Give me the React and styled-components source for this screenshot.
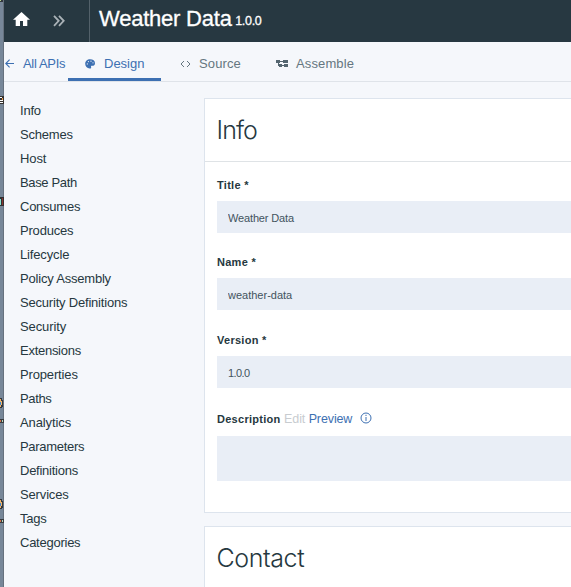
import React from "react";
import styled, { createGlobalStyle } from "styled-components";

const Global = createGlobalStyle`
  * { box-sizing: border-box; }
  body { margin: 0; background: #f5f7fb; font-family: "Liberation Sans", Arial, sans-serif; color: #263840; overflow: hidden; }
`;

const Window = styled.div`
  display: flex;
  width: 571px;
  height: 587px;
  overflow: hidden;
`;

const Desktop = styled.svg`
  flex: 0 0 4px;
  display: block;
`;

const Page = styled.div`
  flex: 1;
  min-width: 0;
  display: flex;
  flex-direction: column;
`;

const Header = styled.header`
  flex: 0 0 42px;
  display: flex;
  background: #273841;
  color: #fff;
`;

const HeaderTools = styled.div`
  width: 86px;
  border-right: 1px solid #53616a;
  display: flex;
  padding: 12px 0 0 9px;
  gap: 23px;
`;

const HeaderTitle = styled.h1`
  margin: 0;
  padding-left: 9px;
  font-size: 22px;
  font-weight: 400;
  line-height: 37px;
  letter-spacing: -0.22px;
  white-space: nowrap;
  -webkit-text-stroke: 0.3px #fff;
`;

const HeaderVersion = styled.small`
  font-size: 12.5px;
  margin-left: 3.5px;
  letter-spacing: -0.3px;
  vertical-align: 1px;
  line-height: 1;
`;

const Tabs = styled.nav`
  flex: 0 0 40px;
  display: flex;
  border-bottom: 1px solid #dfe3e9;
`;

const Tab = styled.a`
  display: flex;
  align-items: center;
  width: ${(p) => p.$width}px;
  height: 39px;
  padding: 7px 0 0 ${(p) => p.$pad}px;
  gap: ${(p) => p.$gap}px;
  border-bottom: 3px solid ${(p) => (p.$active ? "#3d70b2" : "transparent")};
  color: ${(p) => (p.$muted ? "#657680" : "#3d70b2")};
  font-size: 13px;
  letter-spacing: ${(p) => p.$track || 0}px;
  white-space: nowrap;
`;

const Body = styled.div`
  flex: 1;
  min-height: 0;
  display: flex;
`;

const Sidebar = styled.ul`
  flex: 0 0 200px;
  margin: 0;
  padding: 17px 0 0 16px;
  list-style: none;
`;

const SidebarItem = styled.li`
  height: 24px;
  line-height: 24px;
  font-size: 13px;
  letter-spacing: ${(p) => p.$track || 0}px;
`;

const Content = styled.main`
  flex: 1;
  min-width: 0;
  padding-top: 16px;
  display: flex;
  flex-direction: column;
  gap: 13px;
`;

const Panel = styled.section`
  flex: 0 0 ${(p) => p.$height}px;
  background: #fff;
  border: 1px solid #dde4ed;
  border-right: 0;
`;

const PanelTitle = styled.h2`
  margin: 0;
  height: 63px;
  padding-left: 11.5px;
  border-bottom: 1px solid #dfe3e6;
  font-family: Inter, sans-serif;
  font-weight: 300;
  font-size: 25px;
  line-height: 63px;
  letter-spacing: ${(p) => p.$track || 0}px;
`;

const Form = styled.div`
  padding: 16px 0 0 12px;
  display: flex;
  flex-direction: column;
`;

const Field = styled.label`
  display: block;
  height: ${(p) => p.$height}px;
`;

const Label = styled.div`
  display: flex;
  height: ${(p) => p.$height || 23}px;
  line-height: 14px;
  font-size: 11px;
  font-weight: 700;
  letter-spacing: 0.28px;
  white-space: nowrap;
`;

const Mode = styled.span`
  margin-left: 3.5px;
  font-size: 12.5px;
  font-weight: 400;
  letter-spacing: -0.12px;
  color: ${(p) => (p.$active ? "#c8ccd0" : "#3d70b2")};
`;

const Input = styled.input`
  display: block;
  width: 100%;
  height: 32px;
  border: 0;
  padding: 2px 0 0 11px;
  background: #e9eef6;
  color: #43535e;
  font: 11px "Liberation Sans", Arial, sans-serif;
  letter-spacing: ${(p) => p.$track || 0}px;
`;

const TextArea = styled.textarea`
  display: block;
  width: 100%;
  height: 45px;
  border: 0;
  resize: none;
  background: #e9eef6;
`;

const InfoIcon = styled.svg`
  margin: 0 0 0 7.5px;
`;

const sections = [
  ["Info", -0.2], ["Schemes", -0.2], ["Host", -0.1], ["Base Path", -0.35],
  ["Consumes", -0.25], ["Produces", -0.2], ["Lifecycle", -0.15],
  ["Policy Assembly", -0.2], ["Security Definitions", -0.2], ["Security", -0.1],
  ["Extensions", -0.27], ["Properties", -0.15], ["Paths", -0.35],
  ["Analytics", -0.1], ["Parameters", -0.3], ["Definitions", -0.25],
  ["Services", -0.15], ["Tags", -0.2], ["Categories", -0.25],
];

/* Slice of the desktop icons visible beside the window edge. */
const labelMarks = [421, 521];
const roundIcons = [403, 504];

export default function App() {
  return (
    <Window>
      <Global />
      <Desktop width="4" height="587" viewBox="0 0 4 587" shapeRendering="crispEdges">
        <rect width="4" height="587" fill="#778799" />
        <rect x="3" width="1" height="587" fill="#66717e" />
        <path d="M0 0h3v2H0Z" fill="#33383e" />
        <path d="M0 0h1v1H0Z" fill="#b9d789" />
        <path d="M0 96h4v8H0Z" fill="#34312f" />
        <path d="M0 97h2v1H0ZM0 100h3v1H0ZM0 102h3v1H0Z" fill="#fff" />
        <path d="M2 98h1v2H2Z" fill="#ef9b4b" />
        <path d="M0 197h4v9H0Z" fill="#302f32" />
        <path d="M0 199h1v6H0Z" fill="#8be0d0" />
        <path d="M2 198h1v7H2Z" fill="#8a3530" />
        {roundIcons.map((y) => (
          <g key={y}>
            <path d={`M0 ${y - 5}h2v2h1v7h-1v1H0Z`} fill="#33383e" />
            <path d={`M0 ${y - 4}h1v2h1v4H1v2H0Z`} fill="#f0b56d" />
            <path d={`M0 ${y - 1}h1v3H0Z`} fill="#4388cc" />
          </g>
        ))}
        {labelMarks.map((y) => (
          <g key={y}>
            <path d={`M0 ${y - 2}h4v4H0Z`} fill="#383c40" />
            <path d={`M0 ${y - 1}h1v2H0Z`} fill="#d36e48" />
            <path d={`M2 ${y - 1}h1v2H2Z`} fill="#b6d6bd" />
          </g>
        ))}
      </Desktop>
      <Page>
        <Header>
          <HeaderTools>
            <svg width="17" height="15" viewBox="0 0 17 15" fill="#fff">
              <path d="M8.5 0 17 7.7h-2.7V14H10V9H7v5H2.7V7.7H0Z" />
            </svg>
            <svg width="13" height="15" viewBox="0 0 13 15" fill="none" stroke="#aab2b7" strokeWidth="1.8">
              <path d="m1 3.8 4.7 5L1 13.8M6 3.8l4.7 5-4.7 5" />
            </svg>
          </HeaderTools>
          <HeaderTitle>Weather Data<HeaderVersion>1.0.0</HeaderVersion></HeaderTitle>
        </Header>
        <Tabs>
          <Tab $width={64} $pad={1} $gap={9} $track={-0.33}>
            <svg width="9" height="9" viewBox="0 0 9 9" fill="none" stroke="#3d70b2" strokeWidth="1.1">
              <path d="M9 4.5H1M4.6.7.8 4.5l3.8 3.8" />
            </svg>
            All APIs
          </Tab>
          <Tab $active $width={93} $pad={17} $gap={9}>
            <svg width="10" height="10" viewBox="0 0 10 10" fill="#3d70b2" fillRule="evenodd">
              <path d="M5 .3C8 .3 10 1.8 10 4.2c0 2-1.4 2.6-3 2.5-1 0-1.1.5-.9 1.2.3.9-.1 1.7-1.4 1.6C2 9.3.2 7.2.2 4.8.2 2.2 2.3.3 5 .3ZM2.3 4.3a.6.6 0 1 0 0 1.2.6.6 0 0 0 0-1.2ZM3.4 2a.6.6 0 1 0 0 1.2.6.6 0 0 0 0-1.2ZM6 1.6a.6.6 0 1 0 0 1.2.6.6 0 0 0 0-1.2ZM8 3.2a.6.6 0 1 0 0 1.2.6.6 0 0 0 0-1.2Z" />
            </svg>
            Design
          </Tab>
          <Tab $muted $width={94} $pad={19} $gap={8} $track={0.12}>
            <svg width="11" height="8" viewBox="0 0 11 8" fill="none" stroke="#657680" strokeWidth="1">
              <path d="M4 1 1 4l3 3M7 1l3 3-3 3" />
            </svg>
            Source
          </Tab>
          <Tab $muted $width={110} $pad={21} $gap={7} $track={0.12}>
            <svg width="13" height="9" viewBox="0 0 13 9" fill="#54656f">
              <path d="M0 1h4v3H0ZM7 1h5v3H7ZM3 5h3v3H3ZM8 5h4v3H8ZM4 2h3v1H4ZM6 6h2v1H6ZM2 4h1v3H2Z" />
            </svg>
            Assemble
          </Tab>
        </Tabs>
        <Body>
          <Sidebar>
            {sections.map(([name, track]) => (
              <SidebarItem key={name} $track={track}>{name}</SidebarItem>
            ))}
          </Sidebar>
          <Content>
            <Panel $height={415}>
              <PanelTitle $track={-0.9}>Info</PanelTitle>
              <Form>
                <Field $height={77}><Label>Title *</Label><Input $track={-0.15} defaultValue="Weather Data" /></Field>
                <Field $height={78}><Label>Name *</Label><Input defaultValue="weather-data" /></Field>
                <Field $height={79}><Label>Version *</Label><Input $track={-0.6} defaultValue="1.0.0" /></Field>
                <Field as="div" $height={69}>
                  <Label $height={24}>
                    Description<Mode $active>Edit</Mode><Mode>Preview</Mode>
                    <InfoIcon width="12" height="12" viewBox="0 0 12 12" fill="none" stroke="#3d70b2">
                      <circle cx="6" cy="6" r="5" />
                      <path d="M6 5v4M6 2.8v1.2" />
                    </InfoIcon>
                  </Label>
                  <TextArea />
                </Field>
              </Form>
            </Panel>
            <Panel $height={120}><PanelTitle $track={-0.4}>Contact</PanelTitle></Panel>
          </Content>
        </Body>
      </Page>
    </Window>
  );
}
